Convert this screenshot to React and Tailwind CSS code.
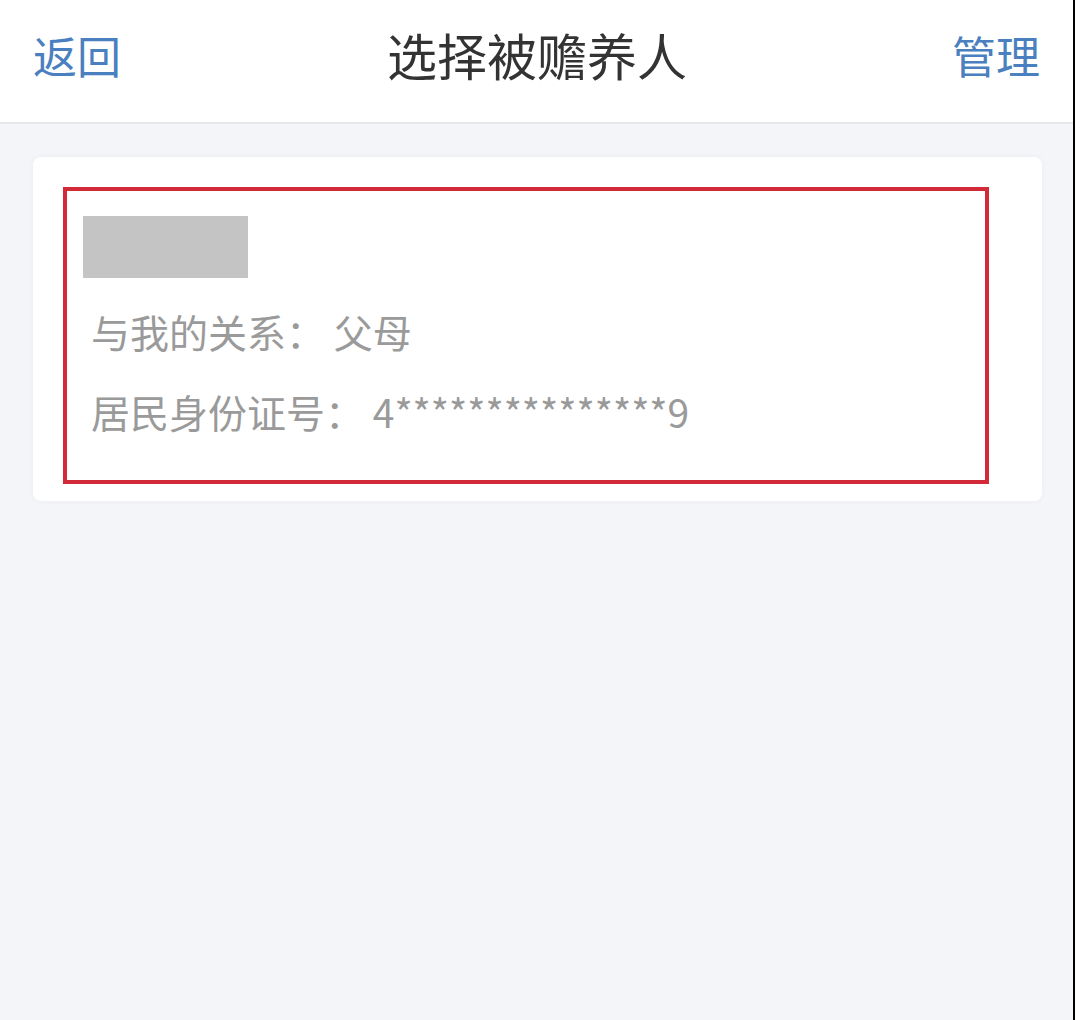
import React from "react";

export default function App() {
  const font = { fontFamily: '"Noto Sans CJK SC", "Noto Sans", sans-serif' };
  return (
    <div className="w-[1080px] h-[1020px] bg-white flex" style={font}>
      <div className="w-[1073px] h-full bg-[#f4f5f9] flex flex-col">
        <div className="h-[122px] bg-white flex items-center justify-between px-[33px] border-b-2 border-[#e6e7ea] box-content">
          <span className="text-[44px] leading-none text-[#4a7fc0] mt-[-12px]">返回</span>
          <span className="text-[50px] leading-none text-[#333333] mt-[-14px] ml-[1px]">选择被赡养人</span>
          <span className="text-[44px] leading-none text-[#4a7fc0] mt-[-12px]">管理</span>
        </div>
        <div className="pt-[33px] px-[33px]">
          <div className="w-[1009px] bg-white rounded-[8px] shadow-[0_0_6px_rgba(0,0,0,0.04)] pt-[30px] pl-[30px] pr-[53px] pb-[17px]">
            <div className="border-4 border-[#d22a38] pl-[16px] pt-[25px] pb-[44px]">
              <div className="w-[165px] h-[62px] bg-[#c4c4c4]" />
              <div className="pl-[8px] mt-[28px] text-[39px] leading-[50px] text-[#9a9a9a]">
                与我的关系：&nbsp;父母
              </div>
              <div className="pl-[8px] mt-[30px] text-[39px] leading-[50px] text-[#9a9a9a]">
                居民身份证号：&nbsp;4***************9
              </div>
            </div>
          </div>
        </div>
      </div>
      <div className="w-[2px] h-full bg-black" />
      <div className="flex-1 h-full bg-white" />
    </div>
  );
}
